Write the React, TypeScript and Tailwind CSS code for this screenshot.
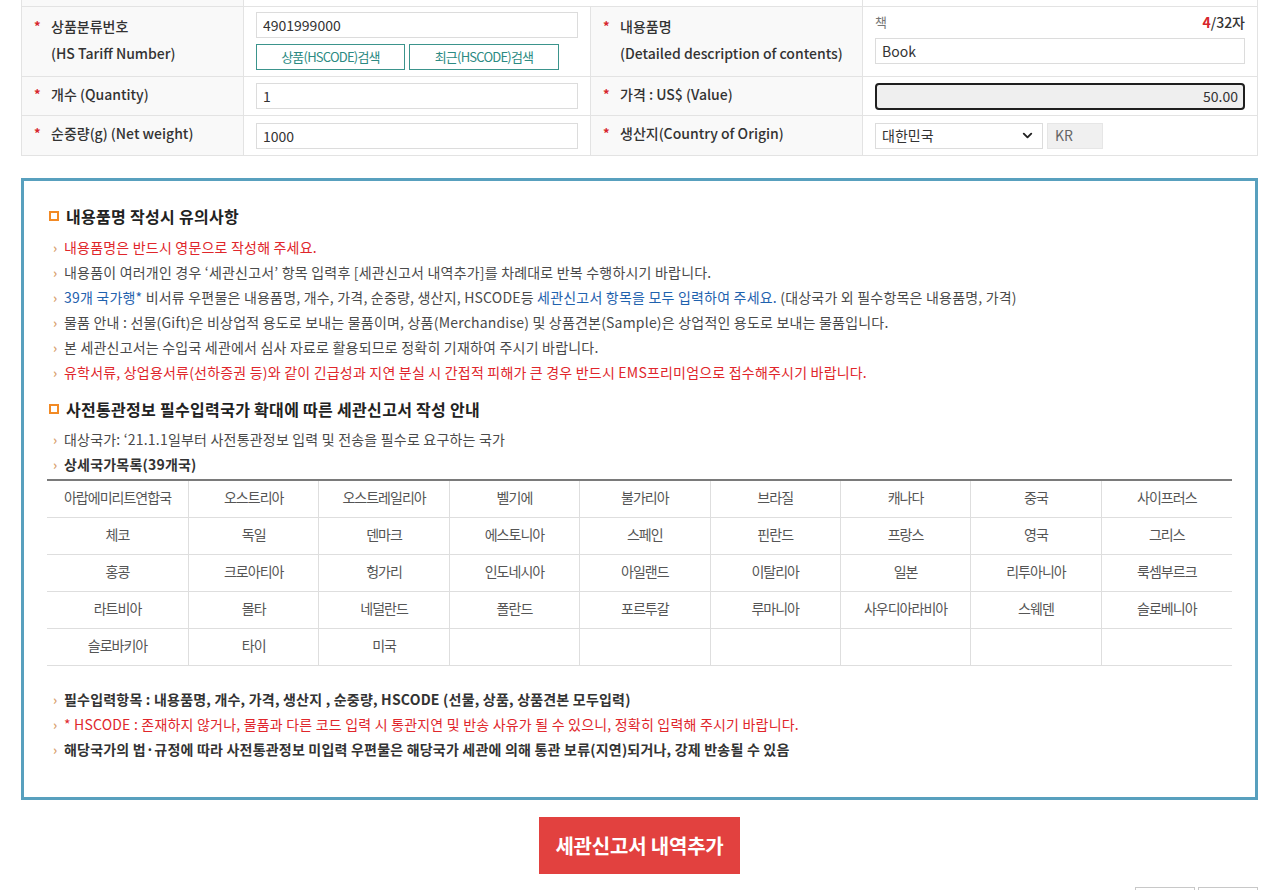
import { ChevronDown } from "lucide-react";

const countries = [
  "아랍에미리트연합국", "오스트리아", "오스트레일리아", "벨기에", "불가리아", "브라질", "캐나다", "중국", "사이프러스",
  "체코", "독일", "덴마크", "에스토니아", "스페인", "핀란드", "프랑스", "영국", "그리스",
  "홍콩", "크로아티아", "헝가리", "인도네시아", "아일랜드", "이탈리아", "일본", "리투아니아", "룩셈부르크",
  "라트비아", "몰타", "네덜란드", "폴란드", "포르투갈", "루마니아", "사우디아라비아", "스웨덴", "슬로베니아",
  "슬로바키아", "타이", "미국", "", "", "", "", "", "",
];

function Star() {
  return <span className="w-[17px] shrink-0 translate-y-[3px] text-[13px] font-bold text-[#d7262b]">*</span>;
}

function Label({ lines }: { lines: string[] }) {
  return (
    <div className="flex items-center bg-[#f9f9f9] pb-[4px] pl-[12px] border-r border-[#e3e3e3]">
      <div className="flex">
        <Star />
        <div className="flex flex-col text-[14px] font-medium leading-[27px] text-[#333]">
          {lines.map((l) => (
            <span key={l}>{l}</span>
          ))}
        </div>
      </div>
    </div>
  );
}

function TextInput({ value }: { value: string }) {
  return (
    <input
      readOnly
      value={value}
      className="h-[26px] w-full border border-[#dcdcdc] bg-white px-[6px] text-[14px] text-[#333] outline-none"
    />
  );
}

function Bullet({ children, className = "" }: { children: React.ReactNode; className?: string }) {
  return (
    <li className={"flex items-center h-[25px] text-[14px] tracking-[0.2px] " + className}>
      <span className="w-[11px] ml-[6px] shrink-0 text-[13px] font-bold text-[#d9a26e]">›</span>
      <span>{children}</span>
    </li>
  );
}

function Heading({ children }: { children: React.ReactNode }) {
  return (
    <h3 className="flex items-center h-[20px] text-[16px] font-bold text-[#222] tracking-[0.3px]">
      <span className="ml-[2px] mr-[7px] h-[10px] w-[10px] border-2 border-[#f28a25]" />
      {children}
    </h3>
  );
}

export default function App() {
  return (
    <div
      className="h-[890px] overflow-hidden bg-white pl-[21px] pr-[18px]"
      style={{ fontFamily: '"Noto Sans CJK KR", "Noto Sans", sans-serif' }}
    >
      {/* Customs form table */}
      <div className="border-x border-[#e3e3e3]">
        <div className="grid h-[7px] grid-cols-[222px_619px_1fr] border-b border-[#e3e3e3]">
          <div className="bg-[#f9f9f9] border-r border-[#e3e3e3]" />
          <div className="border-r border-[#e3e3e3]" />
          <div />
        </div>

        <div className="grid h-[70px] grid-cols-[222px_347px_272px_1fr] border-b border-[#e3e3e3]">
          <Label lines={["상품분류번호", "(HS Tariff Number)"]} />
          <div className="flex flex-col gap-[6px] border-r border-[#e3e3e3] px-[12px] pt-[5px]">
            <TextInput value="4901999000" />
            <div className="flex gap-[4px]">
              <button className="h-[26px] w-[149px] border border-[#3b948c] text-[13px] text-[#2c8a82] tracking-[-0.06em]">
                상품(HSCODE)검색
              </button>
              <button className="h-[26px] w-[150px] border border-[#3b948c] text-[13px] text-[#2c8a82] tracking-[-0.06em]">
                최근(HSCODE)검색
              </button>
            </div>
          </div>
          <Label lines={["내용품명", "(Detailed description of contents)"]} />
          <div className="flex flex-col gap-[6px] px-[12px] pt-[5px]">
            <div className="flex h-[20px] items-center justify-between text-[13px]">
              <span className="text-[#777]">책</span>
              <span className="text-[14px] font-medium text-[#333]">
                <span className="font-bold text-[#d7262b]">4</span>/32자
              </span>
            </div>
            <TextInput value="Book" />
          </div>
        </div>

        <div className="grid h-[39px] grid-cols-[222px_347px_272px_1fr] border-b border-[#e3e3e3]">
          <Label lines={["개수 (Quantity)"]} />
          <div className="flex items-center border-r border-[#e3e3e3] px-[12px]">
            <TextInput value="1" />
          </div>
          <Label lines={["가격 : US$ (Value)"]} />
          <div className="flex items-center px-[12px]">
            <input
              readOnly
              value="50.00"
              className="h-[27px] w-full rounded-[4px] border-2 border-[#1f1f1f] bg-[#efefef] px-[5px] text-right text-[14px] text-[#333] outline-none"
            />
          </div>
        </div>

        <div className="grid h-[40px] grid-cols-[222px_347px_272px_1fr] border-b border-[#e3e3e3]">
          <Label lines={["순중량(g) (Net weight)"]} />
          <div className="flex items-center border-r border-[#e3e3e3] px-[12px]">
            <TextInput value="1000" />
          </div>
          <Label lines={["생산지(Country of Origin)"]} />
          <div className="flex items-center gap-[4px] px-[12px]">
            <div className="flex h-[26px] w-[168px] items-center justify-between border border-[#dcdcdc] pl-[6px] pr-[7px] text-[14px] text-[#333]">
              <span>대한민국</span>
              <ChevronDown size={15} strokeWidth={3} className="text-[#222]" />
            </div>
            <div className="flex h-[26px] w-[56px] items-center border border-[#e6e6e6] bg-[#f0f0f0] pl-[7px] text-[14px] text-[#666]">
              KR
            </div>
          </div>
        </div>
      </div>

      {/* Notice box */}
      <div className="mt-[22px] h-[622px] border-[3px] border-[#58a0be] px-[23px] pt-[25px]">
        <Heading>내용품명 작성시 유의사항</Heading>
        <ul className="mt-[9px] text-[#4a4a4a]">
          <Bullet className="text-[#e0262b]">내용품명은 반드시 영문으로 작성해 주세요.</Bullet>
          <Bullet>내용품이 여러개인 경우 ‘세관신고서’ 항목 입력후 [세관신고서 내역추가]를 차례대로 반복 수행하시기 바랍니다.</Bullet>
          <Bullet>
            <span className="text-[#1f62ae]">39개 국가행*</span> 비서류 우편물은 내용품명, 개수, 가격, 순중량, 생산지, HSCODE등{" "}
            <span className="text-[#1f62ae]">세관신고서 항목을 모두 입력하여 주세요.</span> (대상국가 외 필수항목은 내용품명, 가격)
          </Bullet>
          <Bullet>물품 안내 : 선물(Gift)은 비상업적 용도로 보내는 물품이며, 상품(Merchandise) 및 상품견본(Sample)은 상업적인 용도로 보내는 물품입니다.</Bullet>
          <Bullet>본 세관신고서는 수입국 세관에서 심사 자료로 활용되므로 정확히 기재하여 주시기 바랍니다.</Bullet>
          <Bullet className="text-[#e0262b]">유학서류, 상업용서류(선하증권 등)와 같이 긴급성과 지연 분실 시 간접적 피해가 큰 경우 반드시 EMS프리미엄으로 접수해주시기 바랍니다.</Bullet>
        </ul>

        <div className="mt-[14px]">
          <Heading>사전통관정보 필수입력국가 확대에 따른 세관신고서 작성 안내</Heading>
        </div>
        <ul className="mt-[8px] text-[#4a4a4a]">
          <Bullet>대상국가: ‘21.1.1일부터 사전통관정보 입력 및 전송을 필수로 요구하는 국가</Bullet>
          <Bullet className="font-bold text-[#333]">상세국가목록(39개국)</Bullet>
        </ul>

        <div className="mt-[2px] grid grid-cols-[142px_repeat(8,1fr)] border-t-2 border-[#7a7a7a]">
          {countries.map((c, i) => (
            <div
              key={i}
              className={
                "flex h-[37px] items-center justify-center border-b border-[#dedede] pb-[3px] text-[14px] text-[#555] tracking-[-0.07em] " +
                (i % 9 === 8 ? "" : "border-r")
              }
            >
              {c}
            </div>
          ))}
        </div>

        <ul className="mt-[21px] text-[#333]">
          <Bullet className="font-bold">필수입력항목 : 내용품명, 개수, 가격, 생산지 , 순중량, HSCODE (선물, 상품, 상품견본 모두입력)</Bullet>
          <Bullet className="text-[#e0262b]">* HSCODE : 존재하지 않거나, 물품과 다른 코드 입력 시 통관지연 및 반송 사유가 될 수 있으니, 정확히 입력해 주시기 바랍니다.</Bullet>
          <Bullet className="font-bold">해당국가의 법·규정에 따라 사전통관정보 미입력 우편물은 해당국가 세관에 의해 통관 보류(지연)되거나, 강제 반송될 수 있음</Bullet>
        </ul>
      </div>

      {/* Add button */}
      <div className="mt-[17px] flex justify-center">
        <button className="h-[57px] w-[201px] bg-[#e2413f] text-[20px] font-bold text-white tracking-[-0.2px]">
          세관신고서 내역추가
        </button>
      </div>

      <div className="mt-[13px] flex justify-end gap-[3px]">
        <div className="h-[30px] w-[60px] border border-[#c8c8c8]" />
        <div className="h-[30px] w-[60px] border border-[#c8c8c8]" />
      </div>
    </div>
  );
}
